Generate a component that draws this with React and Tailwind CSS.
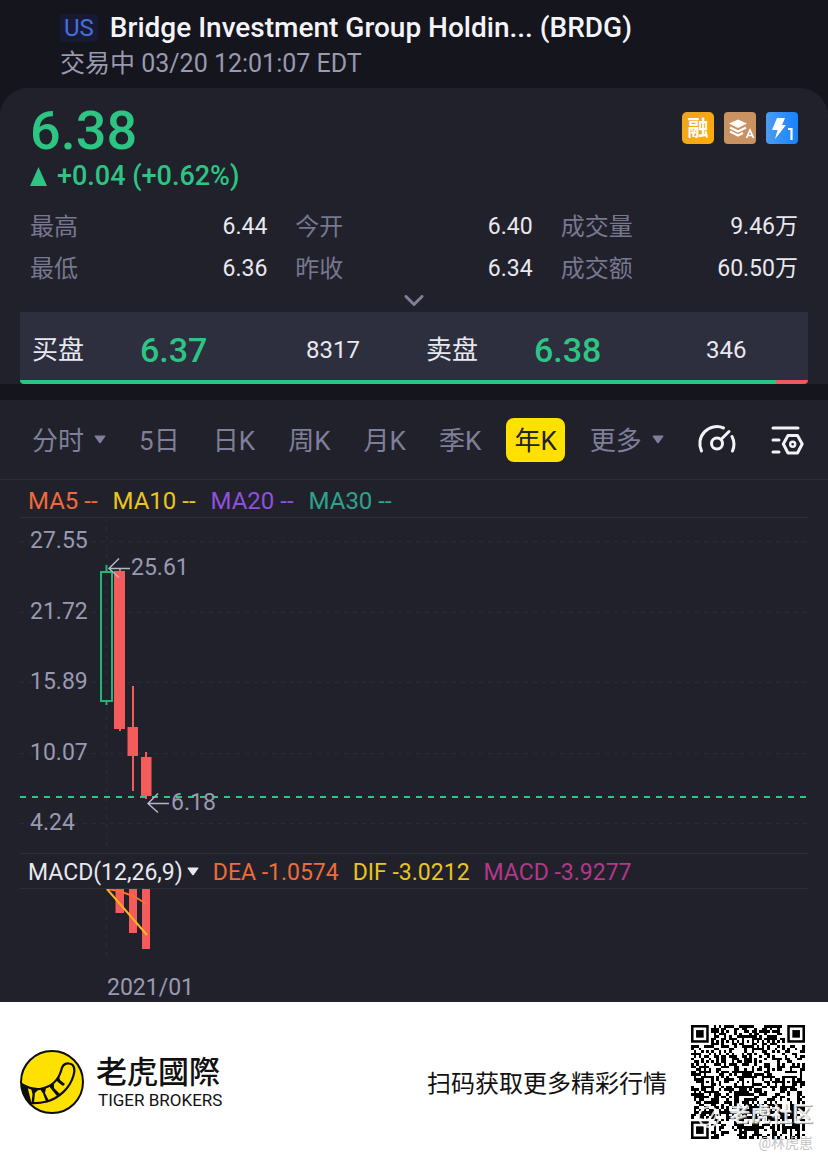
import React from 'react';

const stats = [
  ['最高', '6.44'], ['今开', '6.40'], ['成交量', '9.46万'],
  ['最低', '6.36'], ['昨收', '6.34'], ['成交额', '60.50万'],
];

const prices = [['27.55', 23], ['21.72', 94], ['15.89', 164], ['10.07', 235], ['4.24', 305]];

function Caret({ className }) {
  return (
    <svg className={className} width="12" height="9" viewBox="0 0 12 9" fill="currentColor" aria-hidden="true">
      <path d="M1.2 0.5h9.6q1 0.2 0.5 1.1L6.7 7.9q-.7.8-1.4 0L.7 1.6Q.2.7 1.2.5Z" />
    </svg>
  );
}

function Tab({ children, active, menu }) {
  return (
    <button
      type="button"
      aria-pressed={!!active}
      className={
        active
          ? 'flex h-11 items-center rounded-lg bg-[#ffe100] px-2 pt-1 text-[26px] text-[#21212b]'
          : 'flex h-11 items-center gap-2.5 px-2 pt-1 text-[26px] text-[#7f7f99]'
      }
    >
      {children}
      {menu && <Caret className="mb-1" />}
    </button>
  );
}

function Gauge() {
  return (
    <svg width="40" height="34" viewBox="0 0 40 34" fill="none" stroke="#f2f2f7" strokeWidth="3" strokeLinecap="round" aria-hidden="true">
      <path d="M4.500 28A17 17 0 0 1 26.500 5" />
      <path d="M35 13.500A17 17 0 0 1 35.500 28" />
      <circle cx="20" cy="20.500" r="5.500" />
      <path d="M24 16.500L32 8.500" />
    </svg>
  );
}

function Settings() {
  return (
    <svg width="34" height="32" viewBox="0 0 34 32" fill="none" stroke="#f2f2f7" strokeWidth="3" strokeLinecap="round" strokeLinejoin="round" aria-hidden="true">
      <path d="M3 4h25M3 16h6M3 28h6M18 11.500h9.500l4.700 8.500L27.500 29H18l-4.700-9Z" />
      <circle cx="22.700" cy="20.200" r="2.500" strokeWidth="2.400" />
    </svg>
  );
}

const N = 45;
const spots = [[22, 6], [6, 22], [22, 22], [38, 22], [22, 38], [38, 38]];
function qrCells() {
  let s = 7919;
  let d = '';
  const near = (x, y) => (x < 8 && y < 8) || (x > N - 9 && y < 8) || (x < 8 && y > N - 9);
  for (let y = 0; y < N; y++) {
    for (let x = 0; x < N; x++) {
      s = (s * 1103515245 + 12345) % 2147483648;
      if (near(x, y)) continue;
      const spot = spots.find(([a, b]) => Math.abs(x - a) < 3 && Math.abs(y - b) < 3);
      let on = (s >> 16) & 1;
      if (spot) on = Math.max(Math.abs(x - spot[0]), Math.abs(y - spot[1])) !== 1;
      else if (x === 6) on = y % 2 === 0;
      else if (y === 6) on = x % 2 === 0;
      if (on) d += `M${x} ${y}h1v1h-1z`;
    }
  }
  return d;
}

function QrCode() {
  return (
    <svg className="size-[114px]" viewBox="0 0 45 45" role="img" aria-label="QR">
      <path d={qrCells()} fill="#000" shapeRendering="crispEdges" />
      {[[0, 0], [38, 0], [0, 38]].map(([x, y]) => (
        <g key={`${x}-${y}`}>
          <rect x={x} y={y} width="7" height="7" fill="#000" />
          <rect x={x + 1} y={y + 1} width="5" height="5" fill="#fff" />
          <rect x={x + 2} y={y + 2} width="3" height="3" fill="#000" />
        </g>
      ))}
    </svg>
  );
}

function TigerLogo() {
  return (
    <svg className="size-16" viewBox="0 0 64 64" aria-hidden="true">
      <circle cx="32" cy="32" r="31" fill="#ffe100" stroke="#0d0d0d" strokeWidth="2" />
      <path d="M1.500 34C8 38 14 39.500 20 39 31 37 38 31 41 21c1-5 4-8 8-7.500 5 .500 6.500 5 4.500 12C50 38 39 48 27 51.500 21 53 15 53.500 10 53" fill="none" stroke="#0d0d0d" strokeWidth="2.200" />
      <path d="M1.500 34l6 3 4 16-2 1Q2 46 1.500 34ZM11 38l8 1-4 4-1 10-2.500 0 1-9ZM20 39l6-1-1 5 4 8-3 .500-3-8ZM29 36l5-3 0 5 6 6-3 2-5-6ZM36 30l3-4 1 4 5 4-2 2-4-3Z" fill="#0d0d0d" />
    </svg>
  );
}

export default function App() {
  return (
    <div className="w-full bg-[#15151d] font-['Roboto','Noto_Sans_CJK_SC',sans-serif] text-[#e8e8ee]">
      <header className="flex h-22 flex-col pl-15 pt-2.5">
        <div className="flex h-9 items-center gap-3">
          <span className="rounded-sm bg-[#181a33] px-1 text-2xl leading-7 text-[#4570dc]">US</span>
          <h1 className="text-[28px] font-medium text-[#f4f4f8]">Bridge Investment Group Holdin... (BRDG)</h1>
        </div>
        <p className="text-[25px] leading-9 text-[#9999b0]">交易中 03/20 12:01:07 EDT</p>
      </header>

      <section className="rounded-t-[28px] bg-[#21212b] px-5">
        <div className="flex justify-between px-2.5 pt-4">
          <div className="text-[#2dc584]">
            <p className="text-[54px] font-medium leading-[54px]">6.38</p>
            <p className="flex items-center gap-2.5 text-[27px] font-medium leading-9">
              <svg width="17" height="19" viewBox="0 0 17 19" aria-hidden="true"><path d="M8.500 0L17 19H0Z" fill="currentColor" /></svg>
              +0.04 (+0.62%)
            </p>
          </div>
          <div className="flex gap-2.5 pt-2">
            <span className="flex size-8 items-center justify-center rounded-[5px] bg-linear-to-br from-[#e9a520] to-[#ffac00] pt-0.5 text-[21px] font-bold text-white">融</span>
            <svg width="32" height="32" viewBox="0 0 32 32" aria-hidden="true">
              <rect width="32" height="32" rx="4" fill="#c99262" />
              <path d="M5 11.500L14 7.500l9 4-9 4.500Z" fill="#fff" />
              <path d="M6 15.500l8 4 8-4M6 19.500l8 4 5-2.500" stroke="#fff" strokeWidth="2.200" fill="none" />
              <path d="M22.500 26l3.500-8 3.500 8M24 23.500h4" stroke="#fff" strokeWidth="1.700" fill="none" />
            </svg>
            <svg width="32" height="32" viewBox="0 0 32 32" aria-hidden="true">
              <defs><linearGradient id="bolt" x1="0" x2="1"><stop stopColor="#4c9cf0" /><stop offset="1" stopColor="#1683ff" /></linearGradient></defs>
              <rect width="32" height="32" rx="4" fill="url(#bolt)" />
              <path d="M11 6h8l-3 7h4L9 27l2.500-9H6Z" fill="#fff" />
              <path d="M22 17h3.500V28" stroke="#fff" strokeWidth="2.200" fill="none" />
            </svg>
          </div>
        </div>
        <dl className="grid grid-cols-3 gap-x-7 px-2.5 pt-3 text-2xl leading-[42px]">
          {stats.map(([k, v]) => (
            <div key={k} className="flex justify-between">
              <dt className="text-[#77778f]">{k}</dt>
              <dd className="text-[23px]">{v}</dd>
            </div>
          ))}
        </dl>
        <button type="button" aria-label="展开" className="mx-auto flex h-[22px] w-10 items-center justify-center">
          <svg width="20" height="12" viewBox="0 0 20 12" fill="none" stroke="#7f7f99" strokeWidth="3" strokeLinecap="round" strokeLinejoin="round"><path d="M2 1.500l8 8 8-8" /></svg>
        </button>
        <div className="grid h-17 grid-cols-2 bg-[#2d2e3e] pt-2">
          <div className="flex items-center pl-3">
            <span className="w-27 text-[26px]">买盘</span>
            <span className="w-[166px] text-[34px] font-medium text-[#2dc584]">6.37</span>
            <span className="text-2xl">8317</span>
          </div>
          <div className="flex items-center pl-3">
            <span className="w-27 text-[26px]">卖盘</span>
            <span className="w-43 text-[34px] font-medium text-[#2dc584]">6.38</span>
            <span className="text-2xl">346</span>
          </div>
        </div>
        <div className="flex h-1 overflow-hidden rounded-b-sm">
          <div className="w-24/25 bg-[#2dc584]" />
          <div className="grow bg-[#ed5a5c]" />
        </div>
      </section>

      <main className="mt-4 bg-[#21212b]">
        <nav className="flex h-20 items-center justify-between border-b border-[#2e2e3a] px-6">
          <Tab menu>分时</Tab>
          <Tab>5日</Tab>
          <Tab>日K</Tab>
          <Tab>周K</Tab>
          <Tab>月K</Tab>
          <Tab>季K</Tab>
          <Tab active>年K</Tab>
          <Tab menu>更多</Tab>
          <button type="button" aria-label="指标" className="px-2"><Gauge /></button>
          <button type="button" aria-label="设置" className="pl-2"><Settings /></button>
        </nav>
        <div className="mx-5 flex h-[38px] items-end gap-[15px] border-b border-[#2e2e3a] pl-2 text-2xl leading-8">
          <span className="text-[#ee6b3b]">MA5 --</span>
          <span className="text-[#eac51e]">MA10 --</span>
          <span className="text-[#9050dc]">MA20 --</span>
          <span className="text-[#2fa28c]">MA30 --</span>
        </div>
        <svg className="block w-full" viewBox="0 0 828 335" role="img" aria-label="年K">
          <g stroke="#2a2b35" strokeDasharray="4 5">
            {prices.map(([p, y]) => <path key={p} d={`M20 ${y + 0.5}H808`} />)}
            <path d="M106.500 0V335" />
          </g>
          <g fill="#9999b0" fontSize="23">
            {prices.map(([p, y]) => <text key={p} x="30" y={y + 7}>{p}</text>)}
          </g>
          <g stroke="#22b573" strokeWidth="2" fill="none">
            <path d="M106.500 47v7M106.500 183v4" />
            <rect x="101" y="54" width="11" height="129" />
          </g>
          <g fill="#f45b5b">
            <rect x="114" y="53" width="11" height="158" />
            <rect x="119" y="50" width="2" height="163" />
            <rect x="127.500" y="209" width="10.500" height="29" />
            <rect x="132" y="168" width="2" height="105" />
            <rect x="141" y="239" width="10.500" height="39" />
            <rect x="145" y="234" width="2" height="47" />
          </g>
          <path d="M20 279H808" stroke="#2dc584" strokeWidth="2" strokeDasharray="6 6" />
          <g stroke="#b5b5ca" strokeWidth="1.500" fill="none">
            <path d="M130 50.500h-21M119 40.500l-10 10 10 9" />
            <path d="M169 285.500h-21M158 275.500l-10 10 10 9" />
          </g>
          <g fill="#9999b0" fontSize="23">
            <text x="131" y="57">25.61</text>
            <text x="171" y="292">6.18</text>
          </g>
        </svg>
        <div className="mx-5 flex h-9 items-center gap-3.5 border-y border-[#2e2e3a] pl-2 pt-1 text-[23px]">
          <button type="button" className="flex items-center gap-1">MACD(12,26,9)<Caret className="mb-1" /></button>
          <span className="text-[#ee6b3b]">DEA -1.0574</span>
          <span className="text-[#eac51e]">DIF -3.0212</span>
          <span className="text-[#b2388a]">MACD -3.9277</span>
        </div>
        <svg className="block w-full" viewBox="0 0 828 113" role="img" aria-label="MACD">
          <path d="M106.500 0V70" stroke="#2a2b35" strokeDasharray="4 5" />
          <path d="M115.500 0h8.500v24h-8.500zM129 0h8v44h-8zM142 0h8v60h-8z" fill="#f45b5b" />
          <path d="M107 0L119 2 133 7 147 15" stroke="#fb6d30" strokeWidth="2" fill="none" />
          <path d="M107 0L147 46" stroke="#ffb51e" strokeWidth="2" fill="none" />
          <text x="107" y="106" fill="#9999b0" fontSize="23">2021/01</text>
        </svg>
      </main>

      <footer className="flex h-40 items-center justify-between bg-white pl-5 pr-[23px] text-[#111]">
        <div className="flex items-center gap-3">
          <TigerLogo />
          <div>
            <p className="font-['Noto_Sans_CJK_TC',sans-serif] text-[31px] font-medium leading-8">老虎國際</p>
            <p className="pl-0.5 pt-1 text-[17px] leading-5">TIGER BROKERS</p>
          </div>
        </div>
        <div className="flex items-center gap-6">
          <p className="pt-1 text-2xl">扫码获取更多精彩行情</p>
          <div className="relative">
            <QrCode />
            <span className="absolute -right-2 top-[74px] whitespace-nowrap text-[21px] font-medium text-white/85 [text-shadow:1px_1px_1px_#999]">老虎社区</span>
            <svg className="absolute left-1.5 top-20 size-6" viewBox="0 0 24 24" fill="none" stroke="#fff" strokeOpacity=".8" strokeWidth="2" aria-hidden="true">
              <circle cx="12" cy="12" r="10" />
              <path d="M3 14c8 3 11-1 14-7 4 0 2 10-8 13" />
            </svg>
            <span className="absolute -right-2 -bottom-3.5 whitespace-nowrap text-sm text-[#c4c4c4]">@林虎崽</span>
          </div>
        </div>
      </footer>
    </div>
  );
}
